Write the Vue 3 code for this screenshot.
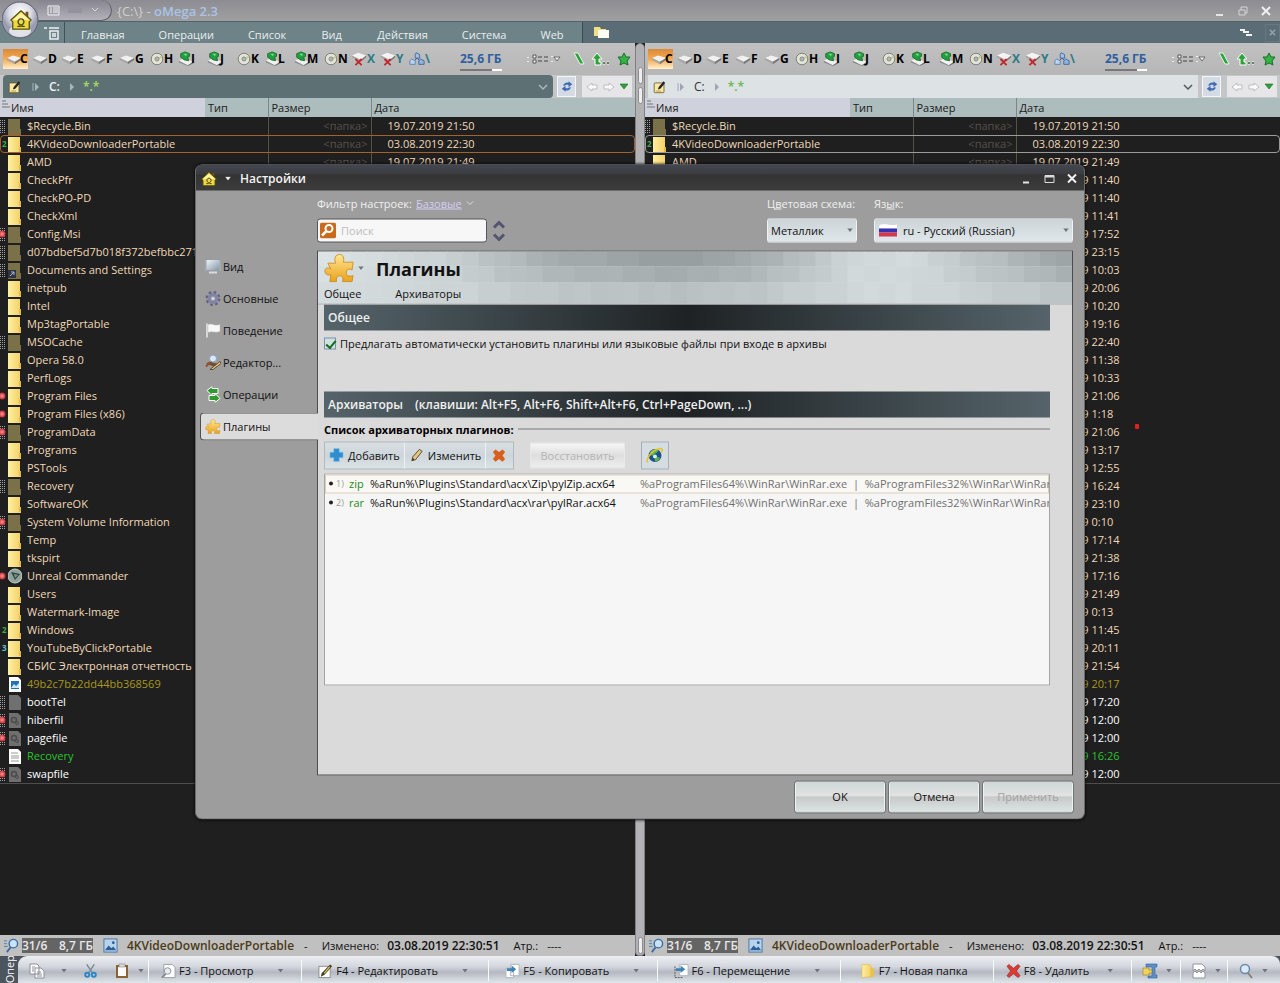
<template>
  <div class="app">
    <svg class="sprite" width="0" height="0" aria-hidden="true">
      <defs>
        <linearGradient id="gFolder" x1="0" x2="1"><stop offset="0" stop-color="#fff0a0" /><stop offset="1" stop-color="#f3cf66" /></linearGradient>
        <linearGradient id="gPuzzle" x1="0" x2="0" y1="0" y2="1"><stop offset="0" stop-color="#ffe792" /><stop offset="1" stop-color="#eba21c" /></linearGradient>
        <linearGradient id="gScreen" x1="0" x2="1" y1="0" y2="1"><stop offset="0" stop-color="#f4f7fa" /><stop offset="1" stop-color="#7f93a8" /></linearGradient>
        <radialGradient id="gRed"><stop offset="0" stop-color="#ff9c9c" /><stop offset="1" stop-color="#c0272d" /></radialGradient>
        <radialGradient id="gOrb" cx=".5" cy=".3"><stop offset="0" stop-color="#ffffff" /><stop offset=".6" stop-color="#dcdee6" /><stop offset="1" stop-color="#9a9db0" /></radialGradient>
      </defs>
      <symbol id="i-hdd" viewBox="0 0 18 16">
        <path d="M1 7l7-3 9 3-7 4z" fill="#f1f1f1" /><path d="M1 7v2l9 5v-3z" fill="#a6a6a6" /><path d="M17 7v2l-7 5v-3z" fill="#777" />
      </symbol>
      <symbol id="i-disc" viewBox="0 0 18 16">
        <circle cx="9" cy="8" r="6.5" fill="#e2e5d6" stroke="#77796c" /><path d="M9 8l5-4a6 6 0 0 1 1 3z" fill="#b9d28a" /><circle cx="9" cy="8" r="2.2" fill="#fff" stroke="#6b6b6b" /><circle cx="9" cy="8" r=".8" fill="#444" />
      </symbol>
      <symbol id="i-usb" viewBox="0 0 18 16">
        <path d="M1 10l6-3 10 4-6 4z" fill="#f1f1f1" /><path d="M1 10v2l10 4v-1z" fill="#8c8c8c" /><path d="M17 11v2l-6 3v-1z" fill="#6f6f6f" />
        <path d="M3 2l5-2 5 2v3l-2 1 1 4-5-1-4-3z" fill="#22a040" stroke="#0c5a20" stroke-width=".8" /><path d="M6 2l4 0-1 3z" fill="#7ddc8b" />
      </symbol>
      <symbol id="i-gone" viewBox="0 0 18 16">
        <path d="M1 4l7-3 9 3-6 5z" fill="#f4f4f4" /><path d="M1 4v2l10 5v-2z" fill="#a4a4a4" /><path d="M17 4v2l-6 5v-2z" fill="#777" /><path d="M5 8l7 7M12 8l-7 7" stroke="#c1272d" stroke-width="2" />
      </symbol>
      <symbol id="i-net" viewBox="0 0 18 16">
        <path d="M9 7l-5 5M9 7l5 5" stroke="#33518a" /><path d="M8 1l4 2v4H7V3z" fill="#9fc3e8" stroke="#3f649c" /><path d="M3 8l4 2v4H1v-4z" fill="#b9d6f2" stroke="#5b7fb4" /><path d="M13 8l4 2v4h-6v-4z" fill="#8fb4de" stroke="#3f649c" />
      </symbol>
      <symbol id="i-house" viewBox="0 0 24 24">
        <path d="M17 3h3v6l-3-3z" fill="#7c4a1e" /><path d="M12 2L1 12l2 2v8h18v-8l2-2z" fill="#efd943" stroke="#57500d" stroke-width="1.4" stroke-linejoin="round" /><path d="M12 4L3 12h18z" fill="#fff3a6" />
        <path d="M8 19h3v-2a3.2 3.2 0 1 1 2 0v2h3" fill="none" stroke="#4c4710" stroke-width="1.5" />
      </symbol>
      <symbol id="i-pencilpad" viewBox="0 0 16 16">
        <rect x="1.500" y="3" width="12" height="12" rx="1" fill="#f8e9a6" stroke="#6b5a22" /><path d="M13 1l2 2-6 7-3 1 1-3z" fill="#262626" /><path d="M4 13h6" stroke="#b08a30" />
      </symbol>
      <symbol id="i-refresh" viewBox="0 0 16 16">
        <path d="M3 7a5 5 0 0 1 7-4V1l5 4-5 4V6c-3-1-4 0-5 1zM13 9a5 5 0 0 1-7 4v2l-5-4 5-4v3c3 1 4 0 5-1z" fill="#3f6db5" />
      </symbol>
      <symbol id="i-puzzle" viewBox="0 0 32 32">
        <path d="M3 11h8c-2-5 0-9 4-9s5 4 4 8h10l-1 8c-4-2-6 0-6 3s2 4 7 3l-1 6H18c2-4-1-6-3-6s-4 2-3 6H5l1-7c-4 1-6-1-6-4s3-4 6-2z" transform="translate(1)" fill="url(#gPuzzle)" stroke="#c98514" stroke-width=".8" />
      </symbol>
      <symbol id="i-monitor" viewBox="0 0 16 16">
        <rect x="1" y="1" width="14" height="11" fill="url(#gScreen)" stroke="#e9edf0" /><rect x="1" y="1" width="14" height="11" fill="none" stroke="#5d6872" stroke-width=".6" /><path d="M4 14h8" stroke="#d7dbe0" stroke-width="2" />
      </symbol>
      <symbol id="i-gear" viewBox="0 0 16 16">
        <circle cx="8" cy="8" r="6" fill="none" stroke="#5f6183" stroke-width="3" stroke-dasharray="2.4 2.300" /><circle cx="8" cy="8" r="4" fill="none" stroke="#8284a6" stroke-width="3" /><circle cx="8" cy="8" r="1.600" fill="#d9dae6" />
      </symbol>
      <symbol id="i-flag" viewBox="0 0 16 16">
        <path d="M2 1v14" stroke="#d8d8d8" stroke-width="2" /><path d="M3 2c4-2 6 2 12 0v7c-5 2-8-1-12 1z" fill="#f8f8f8" stroke="#bbb" stroke-width=".5" />
      </symbol>
      <symbol id="i-edit" viewBox="0 0 16 16">
        <path d="M1 9l4-2 9 3-3 3z" fill="#6b5233" /><path d="M5 15L15 7l1 2-8 6z" fill="#f0c88a" stroke="#4a3419" stroke-width=".8" /><circle cx="8" cy="4" r="3.500" fill="#dbeafa" stroke="#8aa0bd" /><path d="M1 12l4-4" stroke="#a34a2a" stroke-width="2" />
      </symbol>
      <symbol id="i-swap" viewBox="0 0 16 16">
        <path d="M2 4l5-4v2h6v5H7v2zM15 12l-5 4v-2H4V9h6V7z" fill="#2f9a2f" stroke="#fff" />
      </symbol>
      <symbol id="i-plus" viewBox="0 0 16 16"><path d="M5 1h6v4h4v6h-4v4H5v-4H1V5h4z" fill="#2f8fce" stroke="#8cc6ea" stroke-width=".6" /></symbol>
      <symbol id="i-pencil" viewBox="0 0 16 16"><path d="M3 14l1-4 7-8 3 2-7 9z" fill="#e4c383" stroke="#5f4a22" /><path d="M3 14l1-3 2 2z" fill="#333" /></symbol>
      <symbol id="i-cross" viewBox="0 0 16 16"><path d="M1 4l3-3 4 3 4-3 3 3-3 4 3 4-3 3-4-3-4 3-3-3 3-4z" fill="#d9601c" /></symbol>
      <symbol id="i-globe" viewBox="0 0 18 18">
        <circle cx="9" cy="9" r="6.500" fill="#1f4f8c" /><path d="M4 6c3-4 6-3 8-2 0 3-3 2-4 4s-3 2-4-2zM9 15c-1-3 2-5 5-4-1 3-3 4-5 4z" fill="#59b944" /><circle cx="9" cy="10" r="2" fill="#d6effa" /><path d="M2 15C-1 17 3 4 14 2c3 0 3 2 1 4" fill="none" stroke="#e2c62c" stroke-width="1.600" />
      </symbol>
      <symbol id="i-lens" viewBox="0 0 16 16"><circle cx="7" cy="6" r="4.500" fill="#d9ebfa" stroke="#6c87ab" stroke-width="1.500" /><path d="M10 10l4 5" stroke="#8b8378" stroke-width="2" /></symbol>
      <symbol id="i-find" viewBox="0 0 16 16"><circle cx="10" cy="6" r="4.500" fill="#c8e2f8" stroke="#3c6ca5" stroke-width="1.500" /><path d="M7 10l-4 5" stroke="#3c6ca5" stroke-width="2" /><path d="M0 3h3M0 6h3M0 9h4" stroke="#4a7db5" /></symbol>
      <symbol id="i-pic" viewBox="0 0 16 16"><rect x="1" y="1" width="14" height="14" fill="#b9d3ec" stroke="#4573a5" /><path d="M2 13l4-5 3 3 2-2 3 4z" fill="#2b5f98" /><circle cx="11" cy="5" r="1.500" fill="#2b5f98" /></symbol>
      <symbol id="i-copy" viewBox="0 0 16 16"><path d="M1 1h7l2 2v8H1zM6 5h6l3 3v7H6z" fill="#fff" stroke="#8b8f96" /><path d="M8 9h4M8 11h5M8 13h5M3 4h3M3 6h2M3 8h2" stroke="#8b8f96" /></symbol>
      <symbol id="i-cut" viewBox="0 0 16 16"><path d="M4 1l6 9M12 1L6 10" stroke="#7c8894" stroke-width="1.500" /><circle cx="4.500" cy="12" r="2.200" fill="none" stroke="#2b86c8" stroke-width="2" /><circle cx="11.500" cy="12" r="2.200" fill="none" stroke="#2b86c8" stroke-width="2" /></symbol>
      <symbol id="i-paste" viewBox="0 0 16 16"><rect x="2" y="2" width="12" height="13" fill="#8a6234" /><rect x="4" y="4" width="8" height="9" fill="#fafafa" /><rect x="5" y="1" width="6" height="3" fill="#d9d9d9" stroke="#777" stroke-width=".5" /></symbol>
      <symbol id="i-view" viewBox="0 0 16 16"><path d="M3 1h9l3 3v11H3z" fill="#fff" stroke="#999ea6" /><circle cx="7" cy="8" r="3.500" fill="#e6eef4" stroke="#8a8f96" /><path d="M5 11l-4 4" stroke="#888" stroke-width="2" /></symbol>
      <symbol id="i-write" viewBox="0 0 16 16"><rect x="1" y="3" width="12" height="12" fill="#fff" stroke="#8d8d8d" /><path d="M13 1l2 2-8 9-4 2 1-4z" fill="#3d3d22" /><path d="M12 3l1 1-6 7-1-1z" fill="#d7c35b" /></symbol>
      <symbol id="i-f5" viewBox="0 0 16 16"><path d="M6 1h9v12H6zM1 5h8v10H1z" fill="#fff" stroke="#aeb4bb" /><path d="M2 5h5V2l5 4-5 4V8H2z" fill="#3f83b5" /></symbol>
      <symbol id="i-f6" viewBox="0 0 16 16"><path d="M6 1h9v12H6z" fill="#fff" stroke="#aeb4bb" /><path d="M1 3v12h8" fill="none" stroke="#555" stroke-dasharray="2 1" /><path d="M2 5h5V2l5 4-5 4V8H2z" fill="#3f83b5" /></symbol>
      <symbol id="i-f7" viewBox="0 0 16 16"><path d="M1 1h8l2 2v11l-10 1z" fill="url(#gFolder)" stroke="#dbb64a" stroke-width=".6" /><path d="M10 5h4v9l-4 1z" fill="#e8c24d" /></symbol>
      <symbol id="i-f8" viewBox="0 0 16 16"><path d="M1 3l2-2 5 4 5-4 2 2-4 5 4 5-2 2-5-4-5 4-2-2 4-5z" fill="#dc3b33" stroke="#8c1d1a" stroke-width=".6" /></symbol>
      <symbol id="i-pack" viewBox="0 0 16 16"><path d="M4 1h11v3h-2v8h2v3H6v-2h4V4H4z" fill="#5f8fc8" stroke="#33609a" stroke-width=".6" /><path d="M1 5h6v2h3v3H7v2H1z" fill="#f0d35c" stroke="#9a7d1c" stroke-width=".6" /></symbol>
      <symbol id="i-tear" viewBox="0 0 16 16"><path d="M2 1h9l3 3v4l-2-2-2 2-2-2-2 2-2-2-2 2zM2 15v-5l2-2 2 2 2-2 2 2 2-2 2 2v5z" fill="#fff" stroke="#8f949a" /></symbol>
    </svg>

    <header class="titlebar">
      <div class="quick">
        <svg width="13" height="11" viewBox="0 0 13 11"><path d="M1 1h11v9H1z" fill="none" stroke="#f2f2f5" /><path d="M3 3h2M3 5h2M3 7h2M6 3h5M6 5h5M6 7h5" stroke="#f2f2f5" /></svg>
        <span class="ghost"></span>
        <svg width="9" height="6" viewBox="0 0 9 6"><path d="M2 1l3 3 3-3" fill="none" stroke="#d8d8e0" /></svg>
      </div>
      <h1>{C:\} - <b>oMega 2.3</b></h1>
      <div class="winbtns">
        <button aria-label="Свернуть"><svg width="12" height="12" viewBox="0 0 12 12"><path d="M2 10h7" stroke="#e6e6e6" stroke-width="2" /></svg></button>
        <button aria-label="Восстановить"><svg width="12" height="12" viewBox="0 0 12 12"><path d="M2 5h6v5H2zM4 5V2h6v6H8" fill="none" stroke="#d5d5d5" /></svg></button>
        <button aria-label="Закрыть"><svg width="12" height="12" viewBox="0 0 12 12"><path d="M2 2l8 8M10 2l-8 8" stroke="#f0f0f0" stroke-width="2" /></svg></button>
      </div>
      <button class="orb" aria-label="Меню">
        <svg width="38" height="40" viewBox="0 0 38 40"><circle cx="18" cy="20" r="18" fill="url(#gOrb)" stroke="#5d5f70" /><ellipse cx="18" cy="31" rx="11" ry="6" fill="#fff" opacity=".7" /><use href="#i-house" x="8" y="9" width="22" height="22" /></svg>
      </button>
    </header>

    <nav class="ribbon">
      <div class="ribbon-tools">
        <svg width="16" height="14" viewBox="0 0 16 14"><path d="M0 2h3M5 2h10M6 5h8v8H6zM8 8h4M8 10h4" fill="none" stroke="#edf0f2" stroke-width="1.500" /></svg>
      </div>
      <div class="ribbon-tabs">
        <button v-for="m in menu" :key="m">{{ m }}</button>
      </div>
      <svg class="newtab" width="17" height="13" viewBox="0 0 17 13"><path d="M1 1h6l1 2h5v7H1z" fill="#f4de83" /><path d="M5 4h11v8H5z" fill="#fdfdf4" /></svg>
      <div class="ribbon-end">
        <svg width="12" height="9" viewBox="0 0 12 9"><path d="M0 2h5M3 4h6M6 7h6" stroke="#f2f2f2" stroke-width="2" /></svg>
        <button class="closetab" aria-label="Закрыть вкладку"><svg width="7" height="9" viewBox="0 0 9 9"><path d="M1 1l7 7M8 1L1 8" stroke="#94a2a9" stroke-width="2" /></svg></button>
      </div>
    </nav>

    <main class="panes">
      <template v-for="side in sides" :key="side">
        <div v-if="side === 'right'" class="splitter"><i></i><i></i><i class="last"></i></div>
        <section class="pane" :class="side">
          <div class="drives">
            <button v-for="d in drives" :key="d.l" class="drive" :class="[d.i, { on: d.l === 'C' }]">
              <svg width="16" height="16"><use :href="'#i-' + d.i" /></svg><span>{{ d.l }}</span>
            </button>
            <div class="free"><b>25,6 ГБ</b><span class="meter"><i></i></span></div>
            <div class="tools">
              <svg width="26" height="12" viewBox="0 0 26 12"><path d="M1 4v1M1 8v1M25 3v1M25 8v1" stroke="#eee" stroke-width="2" /><path d="M6 2h3v3H6zM6 7h3v3H6z" fill="#fff" stroke="#555" /><path d="M11 4h4M11 8h4M17 4h4M17 8h4" stroke="#444" /></svg>
              <svg class="caret" width="8" height="6" viewBox="0 0 8 6"><path d="M1 1h6L4 5z" fill="#eee" stroke="#555" stroke-width=".8" /></svg>
              <svg width="12" height="14" viewBox="0 0 12 14"><path d="M1 1h4l6 11H7z" fill="#2ca43a" stroke="#e9f5ea" /></svg>
              <svg width="20" height="14" viewBox="0 0 20 14"><path d="M1 7l5-6 5 6H8v3h2v3H4V7z" fill="#2ca43a" stroke="#fff" /><path d="M12 11h2M16 11h2" stroke="#fff" stroke-width="3" /><path d="M12 11h2M16 11h2" stroke="#2f5a33" stroke-width="1.500" /></svg>
              <svg width="14" height="14" viewBox="0 0 14 14"><path d="M7 1l2 4 4 0-3 4 1 4-4-2-4 2 1-4-3-4 4 0z" fill="#35b244" stroke="#14702a" /></svg>
            </div>
          </div>

          <div class="pathrow">
            <div class="path">
              <svg width="13" height="14"><use href="#i-pencilpad" /></svg>
              <svg class="sep1" width="7" height="8" viewBox="0 0 7 8"><path d="M1 0v8" stroke="currentColor" /><path d="M3 0l4 4-4 4z" fill="currentColor" /></svg>
              <a href="#" class="crumb">C:</a>
              <svg class="sep2" width="5" height="8" viewBox="0 0 5 8"><path d="M0 0l4 4-4 4z" fill="currentColor" /></svg>
              <a href="#" class="mask">*.*</a>
              <svg class="drop" width="11" height="8" viewBox="0 0 11 8"><path d="M2 2l4 4 4-4" fill="none" stroke="currentColor" stroke-width="1.500" /></svg>
            </div>
            <button class="refresh" aria-label="Обновить"><svg width="12" height="13"><use href="#i-refresh" /></svg></button>
            <div class="hist">
              <svg width="14" height="12" viewBox="0 0 14 12"><path d="M2 6l5-4v2h5v4H7v2z" fill="#fafafa" stroke="#bdbdbd" /></svg>
              <svg width="14" height="12" viewBox="0 0 14 12"><path d="M12 6L7 2v2H2v4h5v2z" fill="#fafafa" stroke="#bdbdbd" /></svg>
              <svg width="10" height="8" viewBox="0 0 10 8"><path d="M1 1h8L5 6z" fill="#2f9f37" stroke="#1d6b25" stroke-width=".6" /></svg>
            </div>
          </div>

          <table class="files">
            <colgroup><col class="c-name" /><col class="c-type" /><col class="c-size" /><col /></colgroup>
            <thead>
              <tr>
                <th class="sorted"><svg width="8" height="8" viewBox="0 0 8 8"><path d="M0 1h4M0 4h6M0 7h8" stroke="#777" /></svg>Имя</th>
                <th>Тип</th><th class="line">Размер</th><th class="line">Дата</th>
              </tr>
            </thead>
            <tbody>
              <tr v-for="(f, n) in files" :key="n" :class="{ current: n === 1 }">
                <td>
                  <div class="name" :class="f.color">
                    <span class="attr">
                      <i v-if="f.hid" class="dots"></i>
                      <svg v-if="f.red" class="ball" width="6" height="8" viewBox="0 0 6 8"><circle cx="2" cy="4" r="3.500" fill="url(#gRed)" /></svg>
                      <small v-if="f.num" :class="'n' + f.num">{{ f.num }}</small>
                    </span>
                    <svg width="14" height="17" viewBox="0 0 14 17">
                      <template v-if="f.kind === 'app'"><circle cx="7" cy="8" r="7" fill="#8fa39c" stroke="#c8d3cf" /><path d="M3 4l9 2-5 6z" fill="#33443e" /><path d="M6 6l4 1-3 3z" fill="#7e938b" /></template>
                      <template v-else-if="f.kind === 'img'"><path d="M1 1h9l3 3v12H1z" fill="#fff" /><rect x="3" y="5" width="8" height="8" fill="#2271b8" /><path d="M3 12l3-4 2 2 3-3v5z" fill="#cfe6fa" /></template>
                      <template v-else-if="f.kind === 'txt'"><path d="M1 1h9l3 3v12H1z" fill="#fff" /><path d="M3 5h7M3 8h8M3 10h8M3 13h8" stroke="#999" /></template>
                      <template v-else-if="f.kind === 'sys'"><path d="M1 1h9l3 3v12H1z" fill="#6f6f6f" /><circle cx="6" cy="8" r="2.500" fill="none" stroke="#4c4c4c" stroke-width="1.500" /><circle cx="9" cy="11" r="1.500" fill="none" stroke="#4c4c4c" /></template>
                      <template v-else-if="f.kind === 'bin'"><path d="M1 1h9l3 3v12H1z" fill="#707070" /></template>
                      <template v-else-if="f.kind === 'dim' || f.kind === 'link'">
                        <path d="M0 1h12v10h1v6H0z" fill="#7a7148" />
                        <path v-if="f.kind === 'link'" d="M0 8h8v8H0z" fill="#2f3440" /><path v-if="f.kind === 'link'" d="M2 14l4-4M3 10h3v3" fill="none" stroke="#a9b8d6" />
                      </template>
                      <template v-else><path d="M0 1h12v10h1v6H0z" fill="url(#gFolder)" /><path d="M11 11h2v5h-2z" fill="#e3b94c" /></template>
                    </svg>
                    <span>{{ f.name }}</span>
                  </div>
                </td>
                <td></td>
                <td class="size line"><span v-if="n < 31">&lt;папка&gt;</span></td>
                <td class="date line" :class="f.color">{{ f.date }} {{ f.time }}<i v-if="f.name === 'ProgramData'" class="speck"></i></td>
              </tr>
            </tbody>
          </table>

          <div class="rest"></div>

          <footer class="status">
            <svg width="15" height="15"><use href="#i-find" /></svg>
            <span class="count"><b>31/6</b><b>8,7 ГБ</b></span>
            <svg width="15" height="15"><use href="#i-pic" /></svg>
            <b class="sel">4KVideoDownloaderPortable</b>
            <span class="dash">-</span>
            <span class="mod">Изменено:</span>
            <b>03.08.2019 22:30:51</b>
            <span class="at">Атр.:</span>
            <span class="av">----</span>
          </footer>
        </section>
      </template>
    </main>

    <footer class="bottom">
      <div class="side"><span>Опер</span></div>
      <div class="keys">
        <div class="seg first">
          <svg width="16" height="16"><use href="#i-copy" /></svg><i class="tri"></i>
          <svg width="15" height="16"><use href="#i-cut" /></svg>
          <svg width="16" height="16"><use href="#i-paste" /></svg><i class="tri near"></i>
        </div>
        <div v-for="k in keys" :key="k.i" class="seg" :class="k.i">
          <button><svg width="15" height="16"><use :href="'#i-' + k.i" /></svg>{{ k.t }}</button>
          <i v-if="k.i !== 'f7'" class="tri"></i>
        </div>
        <div v-for="k in ['pack', 'tear', 'lens']" :key="k" class="seg small">
          <svg width="16" height="16"><use :href="'#i-' + k" /></svg><i class="tri"></i>
        </div>
      </div>
    </footer>

    <div class="dialog" role="dialog" aria-labelledby="dlg-title">
      <div class="dlg-head">
        <svg width="16" height="17"><use href="#i-house" /></svg>
        <i class="tri light"></i>
        <h2 id="dlg-title">Настройки</h2>
        <div class="winbtns">
          <button aria-label="Свернуть окно"><svg width="12" height="12" viewBox="0 0 12 12"><path d="M3 10h6" stroke="#e6e6e6" stroke-width="2" /></svg></button>
          <button aria-label="Развернуть окно"><svg width="12" height="12" viewBox="0 0 12 12"><path d="M2 3h9v7H2z" fill="none" stroke="#dcdcdc" /><path d="M2 4h9" stroke="#dcdcdc" stroke-width="2" /></svg></button>
          <button aria-label="Закрыть окно"><svg width="12" height="12" viewBox="0 0 12 12"><path d="M2 2l8 8M10 2l-8 8" stroke="#f0f0f0" stroke-width="2" /></svg></button>
        </div>
      </div>

      <div class="dlg-top">
        <div class="filter">
          <p>Фильтр настроек: <a href="#">Базовые</a><svg width="8" height="6" viewBox="0 0 8 6"><path d="M1 1l3 3 3-3" fill="none" stroke="#ddd" /></svg></p>
          <div class="find">
            <label class="search">
              <svg width="16" height="16" viewBox="0 0 16 16"><rect width="16" height="16" rx="2" fill="#c96a1c" /><circle cx="9" cy="6" r="3.500" fill="none" stroke="#fff" stroke-width="2" /><path d="M6 9l-4 4" stroke="#fff" stroke-width="2.500" /></svg>
              <input v-model="query" type="text" placeholder="Поиск" aria-label="Поиск" />
            </label>
            <svg width="14" height="22" viewBox="0 0 14 22"><path d="M2 8l5-5 5 5M2 15l5 5 5-5" fill="none" stroke="#55546f" stroke-width="3" /></svg>
          </div>
        </div>
        <div class="pick scheme">
          <label for="scheme">Ц<u>в</u>етовая схема:</label>
          <div class="box"><select id="scheme"><option>Металлик</option></select><i class="tri"></i></div>
        </div>
        <div class="pick lang">
          <label for="lang">Яз<u>ы</u>к:</label>
          <div class="box">
            <svg width="20" height="14" viewBox="0 0 20 14"><path d="M1 2c6-3 12 1 18-1v4H1z" fill="#fff" /><path d="M1 5h18v4H1z" fill="#3a2fb0" /><path d="M1 9h18v4H1z" fill="#d3374c" /></svg>
            <select id="lang"><option>ru - Русский (Russian)</option></select><i class="tri"></i>
          </div>
        </div>
      </div>

      <div class="dlg-main">
        <nav class="tabs">
          <button v-for="t in tabs" :key="t.i" :class="{ active: t.i === 'puzzle' }">
            <svg width="16" height="16"><use :href="'#i-' + t.i" /></svg>{{ t.t }}
          </button>
        </nav>
        <div class="panel">
          <div class="banner">
            <svg class="mosaic" viewBox="0 0 47 52" preserveAspectRatio="none">
              <rect v-for="t in tiles" :key="t.k" :x="t.x" :y="t.y" width="1.1" :height="t.h" :fill="t.c" />
            </svg>
            <div class="banner-title">
              <svg width="31" height="31"><use href="#i-puzzle" /></svg><i class="tri"></i>
              <h3>Плагины</h3>
            </div>
            <div class="anchors"><a href="#general">Общее</a><a href="#arch">Архиваторы</a></div>
          </div>
          <div class="content">
            <h4 id="general">Общее</h4>
            <label class="check"><input type="checkbox" checked /><span>Предлагать автоматически установить плагины или языковые файлы при входе в архивы</span></label>
            <h4 id="arch">Архиваторы<span>(клавиши: Alt+F5, Alt+F6, Shift+Alt+F6, Ctrl+PageDown, ...)</span></h4>
            <div class="legend">Список архиваторных плагинов:</div>
            <div class="actions">
              <div class="group">
                <button><svg width="15" height="15"><use href="#i-plus" /></svg>Добавить</button>
                <button><svg width="15" height="15"><use href="#i-pencil" /></svg>Изменить</button>
                <button aria-label="Удалить"><svg width="14" height="14"><use href="#i-cross" /></svg></button>
              </div>
              <button class="restore" disabled>Восстановить</button>
              <button class="web" aria-label="Интернет"><svg width="18" height="18"><use href="#i-globe" /></svg></button>
            </div>
            <div class="plugins">
              <div v-for="(p, n) in plugins" :key="p.ext" class="plugin" :class="{ hot: n === 0 }">
                <i></i><small>{{ n + 1 }})</small><em>{{ p.ext }}</em><span>{{ p.path }}</span>
                <span class="prog">%aProgramFiles64%\WinRar\WinRar.exe&nbsp; |&nbsp; %aProgramFiles32%\WinRar\WinRar.exe</span>
              </div>
            </div>
          </div>
        </div>
      </div>

      <div class="dlg-foot">
        <button>OK</button><button>Отмена</button><button disabled>Применить</button>
      </div>
    </div>
  </div>
</template>

<script setup>
import { ref } from 'vue'

const query = ref('')
const sides = ['left', 'right']
const menu = ['Главная', 'Операции', 'Список', 'Вид', 'Действия', 'Система', 'Web']

const icons = { H: 'disc', K: 'disc', N: 'disc', I: 'usb', J: 'usb', L: 'usb', M: 'usb', X: 'gone', Y: 'gone', '\\': 'net' }
const drives = [...'CDEFGHIJKLMNXY\\'].map((l) => ({ l, i: icons[l] || 'hdd' }))

const d = '19.07.2019'
const files = [
  { name: '$Recycle.Bin', time: '21:50', kind: 'dim', hid: true },
  { name: '4KVideoDownloaderPortable', date: '03.08.2019', time: '22:30', num: 2 },
  { name: 'AMD', time: '21:49' },
  { name: 'CheckPfr', time: '11:40' },
  { name: 'CheckPO-PD', time: '11:40' },
  { name: 'CheckXml', time: '11:41' },
  { name: 'Config.Msi', time: '17:52', kind: 'dim', hid: true, red: true },
  { name: 'd07bdbef5d7b018f372befbbc271', time: '23:15', kind: 'dim', hid: true },
  { name: 'Documents and Settings', time: '10:03', kind: 'link', hid: true },
  { name: 'inetpub', time: '20:06' },
  { name: 'Intel', time: '10:20' },
  { name: 'Mp3tagPortable', time: '19:16' },
  { name: 'MSOCache', time: '22:40', kind: 'dim', hid: true },
  { name: 'Opera 58.0', time: '11:38' },
  { name: 'PerfLogs', time: '10:33' },
  { name: 'Program Files', time: '21:06', red: true },
  { name: 'Program Files (x86)', time: '1:18', red: true },
  { name: 'ProgramData', time: '21:06', kind: 'dim', hid: true, red: true },
  { name: 'Programs', time: '13:17' },
  { name: 'PSTools', time: '12:55' },
  { name: 'Recovery', time: '16:24', kind: 'dim', hid: true },
  { name: 'SoftwareOK', time: '23:10' },
  { name: 'System Volume Information', time: '0:10', kind: 'dim', hid: true, red: true },
  { name: 'Temp', time: '17:14' },
  { name: 'tkspirt', time: '21:38' },
  { name: 'Unreal Commander', time: '17:16', kind: 'app', red: true },
  { name: 'Users', time: '21:49' },
  { name: 'Watermark-Image', time: '0:13' },
  { name: 'Windows', time: '11:45', num: 2 },
  { name: 'YouTubeByClickPortable', time: '20:11', num: 3 },
  { name: 'СБИС Электронная отчетность', time: '21:54' },
  { name: '49b2c7b22dd44bb368569', time: '20:17', kind: 'img', color: 'olive' },
  { name: 'bootTel', time: '17:20', kind: 'bin', hid: true, color: 'white' },
  { name: 'hiberfil', time: '12:00', kind: 'sys', hid: true, red: true, color: 'white' },
  { name: 'pagefile', time: '12:00', kind: 'sys', hid: true, red: true, color: 'white' },
  { name: 'Recovery', time: '16:26', kind: 'txt', color: 'green' },
  { name: 'swapfile', time: '12:00', kind: 'sys', hid: true, red: true, color: 'white' }
].map((f) => ({ date: d, ...f }))

const tabs = [
  { i: 'monitor', t: 'Вид' },
  { i: 'gear', t: 'Основные' },
  { i: 'flag', t: 'Поведение' },
  { i: 'edit', t: 'Редактор...' },
  { i: 'swap', t: 'Операции' },
  { i: 'puzzle', t: 'Плагины' }
]

const plugins = [
  { ext: 'zip', path: '%aRun%\\Plugins\\Standard\\acx\\Zip\\pylZip.acx64' },
  { ext: 'rar', path: '%aRun%\\Plugins\\Standard\\acx\\rar\\pylRar.acx64' }
]

const keys = [
  { i: 'view', t: 'F3 - Просмотр' },
  { i: 'write', t: 'F4 - Редактировать' },
  { i: 'f5', t: 'F5 - Копировать' },
  { i: 'f6', t: 'F6 - Перемещение' },
  { i: 'f7', t: 'F7 - Новая папка' },
  { i: 'f8', t: 'F8 - Удалить' }
]

// banner squares: dark band in the middle, light near 3/4, darker again at the right edge
const stops = [[0, 226], [8, 206], [14, 172], [22, 156], [27, 172], [33, 214], [36, 218], [40, 198], [46, 164]]
const shade = (x) => {
  const i = Math.max(1, stops.findIndex((s) => s[0] >= x))
  const [a, va] = stops[i - 1]
  const [b, vb] = stops[i]
  return va + ((vb - va) * (x - a)) / (b - a)
}
const rows = [{ y: 0, h: 15, up: 0 }, { y: 15, h: 16, up: 0.25 }, { y: 31, h: 21, up: 0.6 }]
const tiles = []
rows.forEach((r, j) => {
  for (let x = 0; x < 47; x++) {
    const noise = ((x * 7 + j * 13) % 5) - 2
    const v = shade(x)
    const g = Math.round(v + (214 - v) * r.up + (x > 6 ? noise : 0))
    tiles.push({ k: `${j}-${x}`, x, y: r.y, h: r.h, c: `rgb(${g - 6}, ${g + 1}, ${g + 3})` })
  }
})
</script>

<style>
body {
  margin: 0;
  background: #1f1f1f;
}
</style>

<style scoped>
.app {
  position: relative;
  display: flex;
  flex-direction: column;
  min-height: 100vh;
  overflow: hidden;
  font: 11px/16px "Open Sans", "Noto Sans", sans-serif;
  color: #111;
  background: #1f1f1f;
}
.app * {
  box-sizing: border-box;
}
.sprite {
  position: absolute;
}
svg {
  flex: none;
  display: block;
}
button {
  font: inherit;
  color: inherit;
  padding: 0;
  border: 0;
  background: none;
}
a {
  color: inherit;
  text-decoration: none;
}
h1, h2, h3, h4, p {
  margin: 0;
}
.tri {
  flex: none;
  width: 6px;
  height: 4px;
  background: #6f747b;
  clip-path: polygon(0 0, 100% 0, 50% 100%);
}
.tri.light {
  background: #eee;
}

/* window frame */
.titlebar {
  position: relative;
  display: flex;
  align-items: center;
  height: 21px;
  background: linear-gradient(#8d8c93, #a09fa0);
}
.quick {
  display: flex;
  align-items: center;
  gap: 8px;
  width: 74px;
  height: 21px;
  margin-left: 38px;
  padding-left: 9px;
  border: 1px solid #5f5e6a;
  border-left: 0;
  border-top: 0;
  border-radius: 0 11px 11px 0;
  background: linear-gradient(#86858f, #b3b2bb);
}
.ghost {
  width: 14px;
  height: 6px;
  background: #93929d;
}
h1 {
  margin-left: 5px;
  font-size: 13px;
  font-weight: 400;
  color: #cfcfcf;
}
h1 b {
  font-weight: 600;
  color: #a9c4e8;
}
.winbtns {
  display: flex;
  gap: 11px;
  margin-left: auto;
  padding-right: 6px;
}
.winbtns button {
  width: 12px;
}
.titlebar .winbtns {
  padding-right: 8px;
}
.orb {
  position: absolute;
  left: 2px;
  top: 0;
  z-index: 1;
}
.ribbon {
  display: flex;
  align-items: center;
  height: 22px;
  background: #5a6c75;
  border-top: 1px solid #52626a;
  color: #e9eeee;
}
.ribbon-tools {
  display: flex;
  align-items: center;
  justify-content: flex-end;
  width: 65px;
  height: 100%;
  padding-right: 4px;
  background: #6f8489;
  border-right: 1px solid #42525a;
}
.ribbon-tabs {
  display: flex;
  height: 100%;
  padding-top: 4px;
  background: #6d8388;
  border-right: 1px solid #3c4a52;
}
.ribbon-tabs button {
  min-width: 57px;
  padding: 0 18px 0 16px;
}
.newtab {
  margin-left: 10px;
}
.ribbon-end {
  display: flex;
  align-items: center;
  gap: 13px;
  margin-left: auto;
}
.closetab {
  width: 15px;
  height: 18px;
  padding: 3px;
  border: 1px solid #667881;
}

/* panes */
.panes {
  flex: 1;
  display: flex;
}
.pane {
  flex: 1 1 0;
  min-width: 0;
  display: flex;
  flex-direction: column;
}
.splitter {
  display: flex;
  flex-direction: column;
  align-items: center;
  gap: 3px;
  width: 10px;
  padding: 23px 0 1px;
  border: 1px solid #7f7f84;
  border-radius: 5px 5px 4px 4px;
  background: #b2b2b5;
}
.splitter i {
  width: 5px;
  height: 17px;
  border: 1px solid #8b8b90;
  border-radius: 3px;
  background: #eee;
}
.splitter .last {
  margin-top: auto;
}
.drives {
  display: flex;
  align-items: center;
  height: 32px;
  padding: 0 4px 0 3px;
  background: linear-gradient(#c2c1c1, #b7b6b6);
}
.drive {
  display: flex;
  align-items: center;
  width: 29px;
  height: 20px;
  font-size: 12px;
  font-weight: 700;
  color: #000;
}
.drive.disc svg {
  margin: 0 -1px 0 1px;
}
.drive.usb svg {
  margin: 0 -3px 0 1px;
}
.drive.gone, .drive.net {
  color: #2c7a84;
}
.drive.on {
  width: 25px;
  margin-right: 4px;
  background: linear-gradient(#d98a3a, #f5a84f 50%, #fff0cf);
  overflow: hidden;
}
.drive.on svg {
  margin: 0 -2px 0 3px;
}
.free {
  margin: 4px 0 0 22px;
  color: #2f5f9f;
}
.free b {
  font-size: 12px;
  display: block;
  margin-bottom: 2px;
  white-space: nowrap;
}
.meter {
  display: block;
  height: 2px;
  background: #77787b;
}
.meter i {
  display: block;
  width: 10px;
  height: 2px;
  margin-left: auto;
  background: #fff;
}
.tools {
  display: flex;
  align-items: center;
  gap: 6px;
  margin-left: auto;
}
.caret {
  margin: 0 6px 0 -6px;
}
.pathrow {
  display: flex;
  height: 23px;
  background: #c4c6c8;
}
.path {
  flex: 1;
  display: flex;
  align-items: center;
  margin-left: 3px;
  padding-left: 5px;
  border-radius: 4px 4px 4px 0;
  background: #5d7074;
  color: #a9b8bb;
  font-size: 12px;
}
.right .path {
  background: #dde2e4;
  border-radius: 0;
  color: #a2a2bb;
}
.sep1 {
  margin: 0 10px 0 11px;
}
.crumb {
  font-weight: 600;
  color: #eef2f2;
}
.sep2 {
  margin: 0 8px 0 10px;
}
.mask {
  font-weight: 600;
  color: #a4e05c;
}
.right .crumb {
  color: #333;
  font-weight: 400;
}
.right .mask {
  color: #64b84e;
}
.right .drop {
  color: #555;
}
.drop {
  margin-left: auto;
  margin-right: 5px;
}
.refresh {
  width: 19px;
  height: 21px;
  margin: 1px 6px 1px 4px;
  padding-left: 3px;
  border: 1px solid #f4f6f8;
  background: #d5dbe4;
}
.hist {
  display: flex;
  align-items: center;
  gap: 3px;
  width: 50px;
  height: 21px;
  margin: 1px 3px 1px 0;
  padding-left: 3px;
  background: #e6e6e8;
}

.files {
  width: 100%;
  table-layout: fixed;
  border-collapse: collapse;
  color: #f0d8b8;
  background: #1f1f1f;
  border-bottom: 1px solid #4d4d4d;
}
.c-name { width: 205px; }
.c-type { width: 63px; }
.c-size { width: 103px; }
.files th {
  height: 19px;
  padding: 0 3px;
  text-align: left;
  font-weight: 400;
  color: #1b1b1b;
  background: #adbcbc;
}
.files th.sorted {
  padding-left: 2px;
  background: #cfd2dc;
}
.files th svg {
  display: inline-block;
  margin: 0 1px 4px 0;
}
.files td {
  height: 18px;
  padding: 0;
  overflow: hidden;
  white-space: nowrap;
}
.files .line {
  border-left: 1px solid #55524e;
}
.files th.line {
  border-left-color: #78898b;
}
.name {
  display: flex;
  align-items: center;
  height: 18px;
  overflow: hidden;
}
.name > svg {
  margin-right: 5px;
}
.attr {
  position: relative;
  flex: none;
  width: 8px;
  height: 18px;
}
.dots {
  position: absolute;
  left: 0;
  top: 2px;
  width: 5px;
  height: 14px;
  background:
    repeating-linear-gradient(#1f1f1f 0 1px, transparent 1px 2px),
    repeating-linear-gradient(90deg, #a0a0a0 0 1px, transparent 1px 2px);
}
.ball {
  position: absolute;
  left: 0;
  top: 5px;
}
.attr small {
  position: absolute;
  left: 2px;
  top: 1px;
  font-size: 8px;
  font-weight: 700;
}
.n2 { color: #3fae49; }
.n3 { color: #59c6c6; }
.size {
  text-align: right;
}
.size span {
  padding-right: 3px;
  color: #57504a;
}
.files td.date {
  padding-left: 16px;
}
.files .white { color: #fff; }
.files .olive { color: #a8981c; }
.files .green { color: #27c42b; }
.speck {
  display: inline-block;
  width: 4px;
  height: 5px;
  margin: 0 0 7px 15px;
  border-radius: 1px;
  background: #e0201c;
}
.current {
  outline: 1px solid #9b9b9b;
  outline-offset: -1px;
  border-radius: 4px;
}
.left .current {
  outline-color: #a4622f;
}
.rest {
  flex: 1;
}
.status {
  display: flex;
  align-items: center;
  height: 21px;
  padding-left: 4px;
  background: #c0c0c0;
  white-space: nowrap;
  overflow: hidden;
}
.count {
  display: flex;
  justify-content: space-between;
  width: 71px;
  height: 15px;
  margin: 0 10px 0 3px;
  line-height: 15px;
  color: #e8e8e8;
  background: #646464;
}
.status b {
  font-size: 12px;
  font-weight: 600;
}
.status .sel {
  margin-left: 9px;
  color: #4b3a16;
}
.dash { margin: 0 14px 0 10px; }
.mod { margin-right: 8px; }
.at { margin: 0 9px 0 14px; }

/* function keys */
.bottom {
  display: flex;
  height: 27px;
  background: #4c545d;
}
.side {
  position: relative;
  width: 18px;
  overflow: hidden;
  color: #fff;
}
.side span {
  position: absolute;
  right: 0;
  bottom: 0;
  writing-mode: vertical-rl;
  transform: rotate(180deg);
}
.keys {
  flex: 1;
  display: grid;
  grid-template-columns: 130fr 153fr 187fr 168fr 183fr 153fr 138fr 49fr 47fr 53fr;
  border-radius: 9px 8px 0 0;
  background: linear-gradient(#eceef2, #d3d6dd 40%, #b4b8c1 60%, #dfe6ea);
}
.seg {
  display: flex;
  align-items: center;
  gap: 24px;
  min-width: 0;
  margin: 4px 0 2px;
  padding-left: 12px;
  border-left: 1px solid #f8f9fb;
}
.seg.write, .seg.f5, .seg.f6 {
  padding-left: 16px;
}
.seg.f7 {
  padding-left: 20px;
}
.seg button {
  display: flex;
  align-items: center;
  gap: 3px;
  white-space: nowrap;
}
.seg.first {
  gap: 16px;
  padding-left: 11px;
  border-left: 0;
}
.seg.first .near {
  margin-left: -8px;
}
.seg.f8 {
  gap: 18px;
}
.seg.small {
  gap: 8px;
  padding-left: 10px;
}

/* settings window */
.dialog {
  position: absolute;
  left: 50%;
  top: 50%;
  width: 890px;
  max-width: 96%;
  transform: translate(-50%, -50%);
  border: 1px solid #6a6a6a;
  border-top: 0;
  border-radius: 7px;
  background: #9d9d9d;
  box-shadow: 0 0 3px #000;
}
.dlg-head {
  display: flex;
  align-items: center;
  height: 26px;
  padding: 3px 0 0 5px;
  border-radius: 6px 6px 0 0;
  background: linear-gradient(#434751, #3c3d40 35%, #333 40%, #3c3c3c);
}
.dlg-head .tri {
  margin: 0 9px 0 8px;
}
h2 {
  font-size: 12px;
  font-weight: 600;
  color: #f4f4f4;
}
.dlg-top {
  display: flex;
  height: 60px;
  padding: 5px 11px 0 121px;
  color: #f0f0f0;
}
.dlg-top a {
  text-decoration: underline;
  color: #d5ccf2;
}
.filter p {
  display: flex;
  align-items: center;
  gap: 4px;
  height: 16px;
}
.filter {
  margin-right: auto;
}
.find {
  display: flex;
  align-items: center;
  gap: 5px;
  margin-top: 7px;
}
.search {
  display: flex;
  align-items: center;
  gap: 5px;
  width: 170px;
  height: 24px;
  padding-left: 2px;
  border: 1px solid #555;
  border-radius: 3px;
  background: #f7f7f7;
}
.search input {
  width: 140px;
  padding: 0;
  border: 0;
  outline: 0;
  font: 11px/16px "Open Sans", sans-serif;
  background: none;
}
.search input::placeholder {
  color: #bdbdbd;
}
.pick label {
  display: block;
}
.scheme { width: 90px; margin-right: 17px; }
.lang { width: 199px; }
.box {
  display: flex;
  align-items: center;
  height: 24px;
  margin-top: 7px;
  padding: 0 3px;
  border: 1px solid #eef2f4;
  border-radius: 2px;
  background: linear-gradient(#ccd4d8, #dfe7ea);
}
.box select {
  flex: 1;
  min-width: 0;
  padding: 0;
  border: 0;
  appearance: none;
  font: 11px/16px "Open Sans", sans-serif;
  color: #111;
  background: none;
}
.box svg {
  margin-right: 5px;
}
.dlg-main {
  display: flex;
  padding: 0 11px 0 4px;
}
.tabs {
  display: flex;
  flex-direction: column;
  gap: 4px;
  width: 117px;
  padding-top: 2px;
}
.tabs button {
  display: flex;
  align-items: center;
  gap: 2px;
  height: 28px;
  padding-left: 4px;
  border: 1px solid transparent;
}
.tabs .active {
  position: relative;
  margin-right: -1px;
  border-color: #4f4f4f;
  border-right: 0;
  border-radius: 4px 0 0 4px;
  background: #dcdcdc;
}
.panel {
  flex: 1;
  min-width: 0;
  border: 1px solid #4c4c4c;
  background: #dadada;
}
.banner {
  position: relative;
  height: 53px;
  padding-left: 6px;
  border-bottom: 1px solid #aaa;
}
.mosaic {
  position: absolute;
  left: 0;
  top: 0;
  width: 100%;
  height: 52px;
}
.banner-title {
  position: relative;
  display: flex;
  align-items: center;
  height: 34px;
}
.banner-title .tri {
  margin: 0 12px 0 3px;
}
h3 {
  font-size: 18px;
  line-height: 24px;
}
.anchors {
  position: relative;
  display: flex;
  gap: 34px;
}
.content {
  padding: 0 22px 89px 6px;
}
h4 {
  display: flex;
  gap: 12px;
  height: 26px;
  padding-left: 4px;
  font-size: 12px;
  font-weight: 600;
  line-height: 26px;
  color: #f0f0f0;
  background: linear-gradient(90deg, #55646a, #1e2224 50%, #55646a);
}
.check {
  display: flex;
  align-items: center;
  gap: 4px;
  height: 61px;
  padding-bottom: 35px;
}
.check input {
  position: relative;
  appearance: none;
  width: 12px;
  height: 12px;
  margin: 0;
  border: 1px solid #7d8db8;
  background: #cfe3dc;
}
.check input:checked::after {
  content: "";
  position: absolute;
  left: 3px;
  top: 0;
  width: 4px;
  height: 8px;
  border: solid #166b22;
  border-width: 0 2px 2px 0;
  transform: rotate(40deg);
}
.legend {
  display: flex;
  align-items: center;
  gap: 4px;
  height: 24px;
  font-weight: 700;
  color: #000;
}
.legend::after {
  content: "";
  flex: 1;
  height: 1px;
  background: #777;
}
.actions {
  display: flex;
  margin-bottom: 4px;
}
.group {
  display: flex;
  width: 190px;
  height: 28px;
  margin-right: 16px;
  border: 1px solid #b0bbc0;
  background: linear-gradient(#d9e0e4, #ccd5da 50%, #dce3e6);
}
.group button {
  display: flex;
  align-items: center;
  gap: 4px;
  padding: 0 4px;
  border-right: 1px solid #eef1f3;
}
.group button:last-child {
  padding: 0 6px;
  border: 0;
}
.restore {
  width: 95px;
  height: 26px;
  margin: 1px 16px 0 0;
  border: 1px solid #e8e8e8;
  color: #b5b5b5;
  background: linear-gradient(#f6f6f6, #dedede 50%, #eee);
}
.web {
  width: 28px;
  height: 28px;
  padding: 4px;
  border: 1px solid #a4afb6;
  background: #d6dde2;
}
.plugins {
  min-height: 212px;
  border: 1px solid #a5a5a5;
  background: #f6f6f6;
  white-space: nowrap;
  overflow: hidden;
}
.plugin {
  display: flex;
  align-items: center;
  height: 19px;
  padding-left: 3px;
  border: 1px solid transparent;
}
.plugin.hot {
  border-color: #d8cfbc;
  background: #faf8f4;
}
.plugin i {
  flex: none;
  width: 4px;
  height: 4px;
  border-radius: 50%;
  background: #222;
}
.plugin small {
  flex: none;
  width: 16px;
  padding-left: 3px;
  font-size: 9px;
  color: #999;
}
.plugin em {
  flex: none;
  width: 21px;
  font-style: normal;
  color: #1f8a22;
}
.plugin span {
  flex: none;
  width: 270px;
}
.plugin .prog {
  width: auto;
  color: #707070;
}
.dlg-foot {
  display: flex;
  justify-content: flex-end;
  gap: 4px;
  padding: 6px 11px;
}
.dlg-foot button {
  width: 90px;
  height: 31px;
  border: 1px solid #eef2f2;
  border-radius: 2px;
  outline: 1px solid #6f7676;
  background: linear-gradient(#cfd8d8, #e2e2e2 45%, #c9c9c9 50%, #dbe3e3);
}
.dlg-foot button:disabled {
  color: #a2a2a2;
}
</style>
